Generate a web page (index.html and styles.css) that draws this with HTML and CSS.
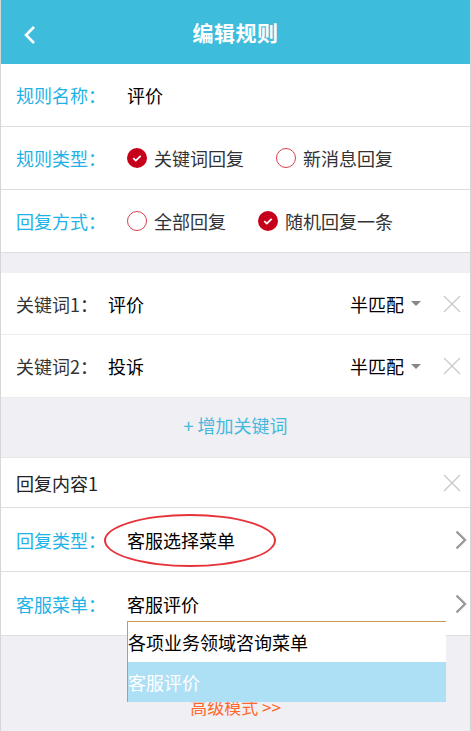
FILE: index.html
```html
<!DOCTYPE html>
<html lang="zh-CN">
<head>
    <meta charset="UTF-8">
    <meta name="viewport" content="width=device-width, initial-scale=1.0">
    <title>编辑规则</title>
    <link rel="stylesheet" href="styles.css">
</head>
<body>
    <div class="page">
        <header class="topbar">
            <a class="back" href="#">
                <svg width="14" height="20" viewBox="0 0 14 20"><path d="M11 2 L3 10 L11 18" fill="none" stroke="#fff" stroke-width="2.6"/></svg>
            </a>
            <h1>编辑规则</h1>
        </header>

        <div class="group">
            <div class="row">
                <span class="label">规则名称：</span>
                <span class="value">评价</span>
            </div>
            <div class="row">
                <span class="label">规则类型：</span>
                <span class="option"><i class="radio checked"></i>关键词回复</span>
                <span class="option"><i class="radio"></i>新消息回复</span>
            </div>
            <div class="row">
                <span class="label">回复方式：</span>
                <span class="option"><i class="radio"></i>全部回复</span>
                <span class="option"><i class="radio checked"></i>随机回复一条</span>
            </div>
        </div>

        <div class="group keywords">
            <div class="row">
                <span class="label short">关键词1：</span>
                <span class="value">评价</span>
                <span class="match">半匹配<i class="caret"></i></span>
                <i class="close"></i>
            </div>
            <div class="row">
                <span class="label short">关键词2：</span>
                <span class="value">投诉</span>
                <span class="match">半匹配<i class="caret"></i></span>
                <i class="close"></i>
            </div>
        </div>

        <div class="add">+ 增加关键词</div>

        <div class="group reply">
            <div class="row title">
                <span class="value grow">回复内容1</span>
                <i class="close"></i>
            </div>
            <div class="row">
                <span class="label">回复类型：</span>
                <span class="value grow">客服选择菜单</span>
                <i class="arrow"></i>
                <span class="mark"></span>
            </div>
            <div class="row">
                <span class="label">客服菜单：</span>
                <span class="value grow">客服评价</span>
                <i class="arrow"></i>
                <ul class="dropdown">
                    <li>各项业务领域咨询菜单</li>
                    <li class="selected">客服评价</li>
                </ul>
            </div>
        </div>

        <div class="advanced">高级模式 &gt;&gt;</div>
    </div>
</body>
</html>
```

FILE: styles.css
```css
body {
    margin: 0;
    font-family: "Noto Sans CJK SC", "Noto Sans", sans-serif;
    background-color: #efeff4;
}
.page {
    width: 471px;
    min-height: 100vh;
    box-sizing: border-box;
    border-left: 1px solid #d6d6d6;
    border-right: 1px solid #d6d6d6;
}
.topbar {
    height: 64px;
    background-color: #3dbcdb;
    display: flex;
    align-items: center;
    justify-content: center;
    position: relative;
}
.topbar h1 {
    margin: 0;
    color: #fff;
    font-size: 21px;
    font-weight: bold;
    letter-spacing: 0.5px;
}
.back {
    position: absolute;
    left: 22px;
    top: 25px;
    display: flex;
}
.group {
    background-color: #fff;
}
.row {
    height: 62px;
    display: flex;
    align-items: center;
    padding-left: 15px;
    border-bottom: 1px solid #dedede;
    font-size: 18px;
    line-height: 24px;
    position: relative;
}
.label {
    width: 111px;
    flex-shrink: 0;
    color: #1fb2e6;
}
.label.short {
    width: 92px;
    color: #333;
}
.value {
    color: #000;
}
.value.grow {
    flex: 1;
}
.option {
    display: flex;
    align-items: center;
    color: #333;
    margin-right: 32px;
}
.radio {
    width: 20px;
    height: 20px;
    margin-right: 7px;
    box-sizing: border-box;
    border: 1.5px solid #d9404c;
    border-radius: 50%;
}
.radio.checked {
    border: none;
    background: #c6001b url("data:image/svg+xml,%3Csvg xmlns='http://www.w3.org/2000/svg' width='20' height='20'%3E%3Cpath d='M6.3 10.2 L8.8 12.6 L13.7 7.8' fill='none' stroke='%23fff' stroke-width='1.8'/%3E%3C/svg%3E");
}
.keywords {
    margin-top: 20px;
}
.keywords .row {
    height: 62px;
    border-bottom-color: #ececec;
}
.keywords .row:first-child {
    height: 61px;
}
.keywords .value {
    flex: 1;
}
.match {
    display: flex;
    align-items: center;
    color: #000;
    margin-left: 3px;
}
.caret {
    width: 0;
    height: 0;
    margin-left: 7px;
    border-left: 5px solid transparent;
    border-right: 5px solid transparent;
    border-top: 5px solid #888;
}
.close {
    width: 18px;
    height: 18px;
    margin-left: 22px;
    margin-right: 9px;
    background: url("data:image/svg+xml,%3Csvg xmlns='http://www.w3.org/2000/svg' width='18' height='18'%3E%3Cpath d='M1 1 L17 17 M17 1 L1 17' stroke='%23c8c8c8' stroke-width='1.2'/%3E%3C/svg%3E");
}
.arrow {
    width: 12px;
    height: 20px;
    margin-right: 3px;
    background: url("data:image/svg+xml,%3Csvg xmlns='http://www.w3.org/2000/svg' width='12' height='20'%3E%3Cpath d='M1.5 1.5 L10 10 L1.5 18.5' fill='none' stroke='%23999' stroke-width='2.4'/%3E%3C/svg%3E");
}
.add {
    height: 60px;
    padding-bottom: 5px;
    display: flex;
    align-items: center;
    justify-content: center;
    color: #45b9dc;
    font-size: 18px;
    border-bottom: 1px solid #e6e6e6;
    box-sizing: border-box;
}
.reply .title {
    height: 49px;
}
.reply .title .value {
    color: #222;
}
.reply .row:not(.title) {
    height: 63px;
}
.mark {
    position: absolute;
    left: 103px;
    top: 6px;
    width: 172px;
    height: 53px;
    box-sizing: border-box;
    border: 2.5px solid #e6333a;
    border-radius: 50%;
}
.dropdown {
    position: absolute;
    left: 126px;
    top: 49px;
    width: 318px;
    margin: 0;
    padding: 0;
    list-style: none;
    border-top: 1px solid #c99c52;
    border-left: 1px solid #c99c52;
    background-color: #fff;
    z-index: 2;
}
.dropdown li {
    height: 40px;
    line-height: 40px;
    color: #000;
}
.dropdown li.selected {
    background-color: #ade0f5;
    color: #fff;
}
.advanced {
    padding-top: 60px;
    text-align: center;
    font-size: 17px;
    line-height: 22px;
    color: #ff6a2c;
}
```
